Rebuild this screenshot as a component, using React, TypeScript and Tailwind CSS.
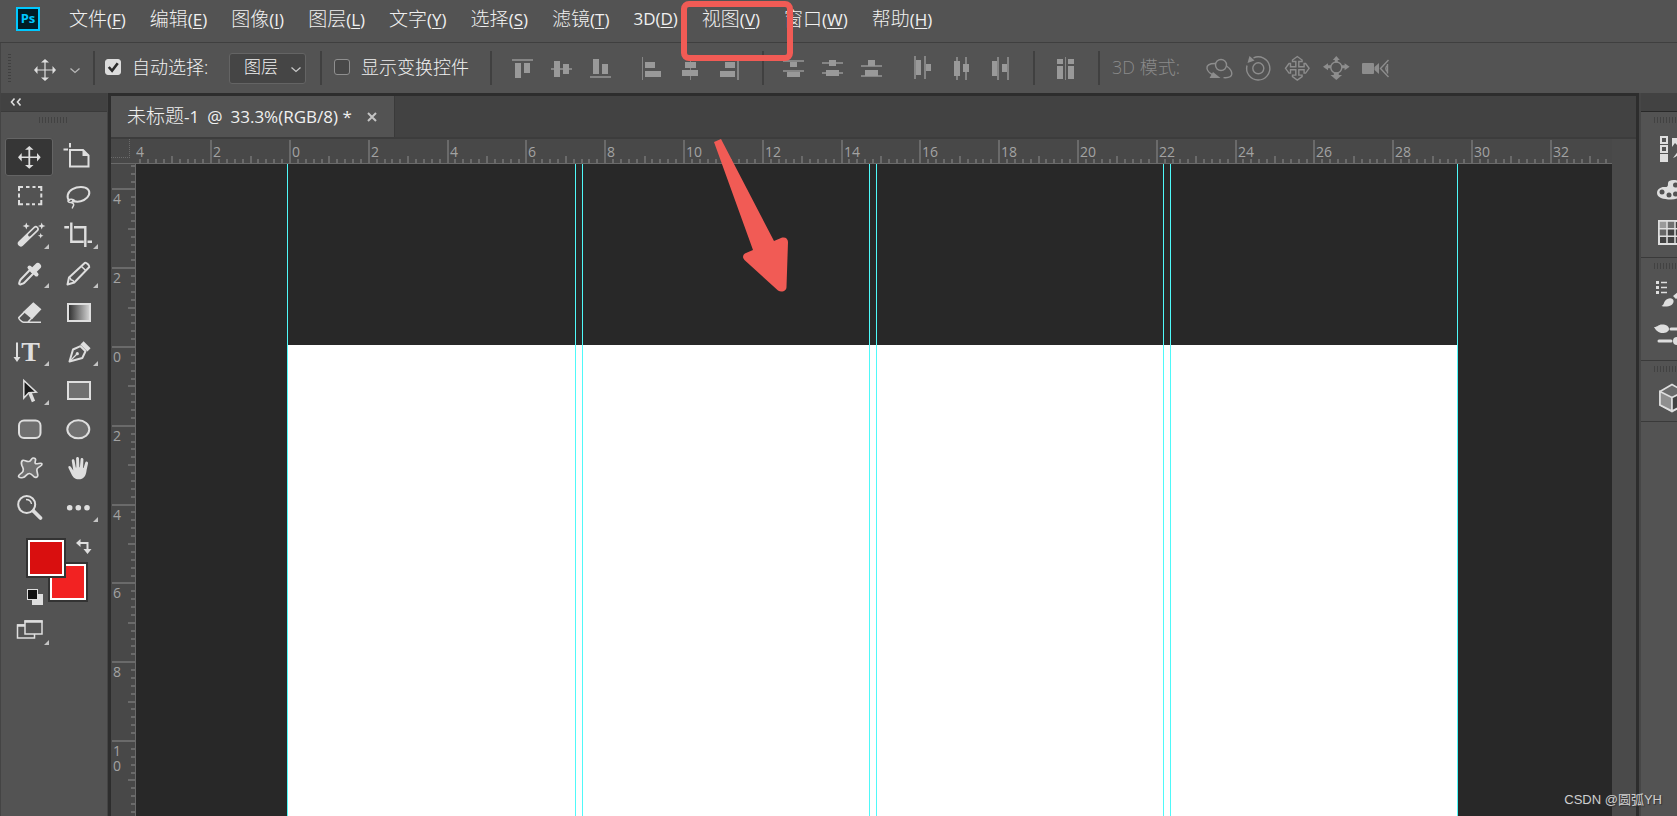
import type { ReactNode } from "react";

const MENUS = [
  { name: "文件", key: "F" },
  { name: "编辑", key: "E" },
  { name: "图像", key: "I" },
  { name: "图层", key: "L" },
  { name: "文字", key: "Y" },
  { name: "选择", key: "S" },
  { name: "滤镜", key: "T" },
  { name: "3D", key: "D" },
  { name: "视图", key: "V" },
  { name: "窗口", key: "W" },
  { name: "帮助", key: "H" },
];

// [x, y, width, height]
type Bar = [number, number, number, number];

interface AlignIcon {
  label: string;
  bars: Bar[];
  lines: Bar[];
}

const ALIGN_VERTICAL: AlignIcon[] = [
  { label: "顶对齐", bars: [[9, 11, 6, 15], [18, 11, 6, 10]], lines: [[6, 7, 21, 2]] },
  { label: "垂直居中对齐", bars: [[9, 9, 6, 16], [18, 12, 6, 10]], lines: [[6, 16, 21, 2]] },
  { label: "底对齐", bars: [[9, 7, 6, 15], [18, 12, 6, 10]], lines: [[6, 24, 21, 2]] },
];

const ALIGN_HORIZONTAL: AlignIcon[] = [
  { label: "左对齐", bars: [[10, 10, 10, 6], [10, 19, 16, 6]], lines: [[7, 5, 1, 23]] },
  { label: "水平居中对齐", bars: [[11, 10, 11, 6], [8, 18, 16, 6]], lines: [[16, 5, 1, 23]] },
  { label: "右对齐", bars: [[12, 10, 10, 6], [7, 19, 15, 6]], lines: [[24, 5, 2, 23]] },
];

const DISTRIBUTE_VERTICAL: AlignIcon[] = [
  { label: "按顶分布", bars: [[13, 10, 7, 5], [10, 20, 13, 5]], lines: [[6, 8, 21, 2], [6, 18, 21, 2]] },
  { label: "垂直居中分布", bars: [[13, 8, 7, 6], [10, 18, 13, 6]], lines: [[6, 10, 21, 2], [6, 20, 21, 2]] },
  { label: "按底分布", bars: [[13, 8, 7, 6], [10, 18, 13, 6]], lines: [[6, 13, 21, 2], [6, 23, 21, 2]] },
];

const DISTRIBUTE_HORIZONTAL: AlignIcon[] = [
  { label: "按左分布", bars: [[10, 8, 5, 15], [20, 12, 5, 7]], lines: [[8, 4, 2, 23], [18, 4, 2, 23]] },
  { label: "水平居中分布", bars: [[9, 9, 6, 15], [18, 12, 6, 8]], lines: [[11, 5, 2, 23], [20, 5, 2, 23]] },
  { label: "按右分布", bars: [[8, 9, 5, 15], [18, 12, 5, 8]], lines: [[13, 5, 2, 23], [23, 5, 2, 23]] },
];

const AUTO_ALIGN: AlignIcon[] = [
  {
    label: "自动对齐图层",
    bars: [[8, 7, 6, 5], [8, 14, 6, 13], [19, 7, 6, 5], [19, 14, 6, 13]],
    lines: [[16, 5, 1, 23]],
  },
];

function AlignGroup({ icons }: { icons: AlignIcon[] }) {
  return (
    <div className="flex gap-[7px]">
      {icons.map((icon) => (
        <button key={icon.label} aria-label={icon.label} className="size-8">
          <svg viewBox="0 0 32 32" className="size-8" shapeRendering="crispEdges">
            {icon.lines.map(([x, y, w, h]) => (
              <rect key={`l${x}-${y}`} x={x} y={y} width={w} height={h} fill="#858585" />
            ))}
            {icon.bars.map(([x, y, w, h]) => (
              <rect key={`b${x}-${y}`} x={x} y={y} width={w} height={h} fill="#999999" />
            ))}
          </svg>
        </button>
      ))}
    </div>
  );
}

const MODES_3D: { label: string; icon: ReactNode }[] = [
  {
    label: "环绕移动 3D 相机",
    icon: (
      <>
        <circle cx="18" cy="13" r="5.500" />
        <path d="M12 11.500C6 11.500 3.500 13.500 4 16.500c.4 2.600 2.500 4.500 5.500 6.200M23.500 14c3.500 2.500 5.500 5 5.300 8-.3 3-3.500 4-8.300 3.600" />
        <path d="M10 20l7.500 6H6.500z" fill="#8d8d8d" stroke="none" />
      </>
    ),
  },
  {
    label: "滚动 3D 相机",
    icon: (
      <>
        <circle cx="16.300" cy="16.300" r="5.500" />
        <path d="M11.500 5.800A11.600 11.600 0 1 1 5 13.500" />
        <path d="M5.500 11l2-7 5 4.500z" fill="#8d8d8d" stroke="none" />
      </>
    ),
  },
  {
    label: "平移 3D 相机",
    icon: (
      <path d="M14.800 14.800V9.500h-3.300v-1.500l4.800-3.500 4.800 3.500v1.500h-3.300v5.300h5.300v-3.300h1.500l3.500 4.800-3.500 4.800h-1.500v-3.300h-5.300v5.300h3.300v1.500l-4.800 3.500-4.800-3.500v-1.500h3.300v-5.300H9.500v3.300H8l-3.500-4.800L8 11.500h1.500v3.300z" />
    ),
  },
  {
    label: "滑动 3D 相机",
    icon: (
      <>
        <circle cx="16.300" cy="15.500" r="5.500" />
        <path
          d="M16.300 4l3.500 4h-2v2.500h-3V8h-2zM3 14.800l5-3.500v2h3v3H8v2zM29.600 14.800l-5-3.500v2h-3v3h3v2zM16.300 28l-5.800-5h3.300v-2.500h5V23h3.300z"
          fill="#8d8d8d"
          stroke="none"
        />
      </>
    ),
  },
  {
    label: "变焦 3D 相机",
    icon: (
      <>
        <rect x="3" y="11" width="12" height="11" rx="1" fill="#8d8d8d" stroke="none" />
        <path d="M20 11v11l-4.500-4v-3z" fill="#8d8d8d" stroke="none" />
        <path d="M29.500 8l-8 8.500 8 8.500M28.500 12v9.500" />
        <path d="M28.500 13.500a3.500 3.500 0 0 0 0 6" />
      </>
    ),
  },
];

interface Tool {
  label: string;
  icon: ReactNode;
  more?: boolean;
  active?: boolean;
}

// every tool icon is drawn in a 48x38 box, light stroke
const TOOLS: Tool[] = [
  {
    label: "移动工具",
    active: true,
    icon: (
      <path
        d="M23.400 11.700h-3.400L24.300 8l4.200 3.700h-3.300v6.700H32v-3.300l3.700 4.200-3.700 4.200v-3.400h-6.800v6.800h3.300l-4.200 3.900-4.300-3.900h3.400v-6.800h-6.700v3.400L13 19.300l3.700-4.200v3.300h6.700z"
        fill="#dedede"
        stroke="none"
      />
    ),
  },
  {
    label: "画板工具",
    icon: (
      <>
        <path d="M9.500 11.500h4.500M16 5v4.500" />
        <path d="M16 12h13l5.500 5.500v11H16z" />
        <path d="M28.500 12v6h6z" fill="#dedede" stroke="none" />
      </>
    ),
  },
  {
    label: "矩形选框工具",
    icon: (
      <path d="M14 14v-4h4M21 10h3.500M27.500 10h3M33 10h3.300v4M36.300 16.500v4M36.300 23v4.300H33M30 27.300h-3M24.500 27.300H21M18 27.300h-4V23M14 20.500v-4" />
    ),
  },
  {
    label: "套索工具",
    icon: (
      <>
        <path d="M15.500 24c-3.500-4-2-9 3-11.800 5-2.900 12.500-3 15.500.2 2.800 3.200 1 8-4 10.600-3.500 1.800-8.500 2-12 .5" />
        <path
          d="M20.500 23.300c-1.500-1.300-4.500-1.500-6-.3-1.300 1.200.2 2.700 2.200 2.500 2-.2 3.500-1 3.800-2.200M17 25.500c2.500.5 3.300 2 2.300 3.500-.8 1-1.300 1.500-.7 2.500"
          strokeWidth="1.500"
        />
      </>
    ),
  },
  {
    label: "魔棒工具",
    more: true,
    icon: (
      <>
        <path d="M15.800 27.500L30.800 13" strokeWidth="6" strokeLinecap="round" />
        <path d="M24.500 19l6.300-6" stroke="#535353" strokeWidth="2.800" strokeLinecap="round" />
        <path
          d="M21.300 6.500l1 2.500 2.700 1-2.700 1-1 2.500-1-2.500-2.700-1 2.700-1zM36.700 6.500l1 2.500 2.700 1-2.700 1-1 2.500-1-2.500-2.700-1 2.700-1zM35.700 17l.8 2 2 .8-2 .8-.8 2-.8-2-2-.8 2-.8z"
          fill="#dedede"
          stroke="none"
        />
      </>
    ),
  },
  {
    label: "裁剪工具",
    more: true,
    icon: <path d="M17.300 6.500v19.200h12.500M10.300 11.300h4.700M20 11.300h11.300V31M33.500 25.700h4.500" strokeWidth="2.400" />,
  },
  {
    label: "吸管工具",
    more: true,
    icon: (
      <>
        <path d="M26 13.800l-10.300 10.700c-1.200 1.300-.8 2-1.500 3.500-.4 1 .7 1.800 1.600 1.300 1.400-.8 2.400-.5 3.500-1.600L29.800 17" />
        <path d="M24.500 12.500l7 7" strokeWidth="4" strokeLinecap="round" />
        <path d="M28.500 15.500l4.300-4.300" strokeWidth="6.500" strokeLinecap="round" />
      </>
    ),
  },
  {
    label: "铅笔工具",
    more: true,
    icon: (
      <>
        <path d="M13.500 29.500l1.500-7L31 7.800c1-.8 4.700 2.700 4.300 4.200L20.300 27.500z" strokeLinejoin="round" />
        <path d="M15 22.500c1.500.2 1.800.7 2 2.300 1.700.2 2.600.6 3.300 2.700M27.500 11.500l4.500 4.300" strokeWidth="1.500" />
      </>
    ),
  },
  {
    label: "橡皮擦工具",
    icon: (
      <>
        <path d="M28.300 9.500l6.700 5.800-8 8.500-7.200-6.200z" fill="#dedede" />
        <path d="M19.800 17.600l-6 6c-.8.800 3.200 4.600 4.700 4.600h4.300l4.200-4.400M18 28.300h18" strokeWidth="1.500" />
      </>
    ),
  },
  {
    label: "渐变工具",
    icon: (
      <>
        <defs>
          <linearGradient id="tool-gradient">
            <stop offset="0" stopColor="#2b2b2b" />
            <stop offset="1" stopColor="#d6d6d6" />
          </linearGradient>
        </defs>
        <rect x="14" y="10" width="22" height="17" fill="url(#tool-gradient)" />
      </>
    ),
  },
  {
    label: "直排文字工具",
    more: true,
    icon: (
      <>
        <path d="M12 9.500V25" />
        <path d="M8.500 24h7L12 29z" fill="#dedede" stroke="none" />
        <text
          x="25.500"
          y="28"
          textAnchor="middle"
          fontFamily="Liberation Serif, serif"
          fontWeight="700"
          fontSize="28"
          fill="#dedede"
          stroke="none"
        >
          T
        </text>
      </>
    ),
  },
  {
    label: "钢笔工具",
    more: true,
    icon: (
      <>
        <path d="M15.500 28.500l3.500-12 7.500-3.300 5 5L28.300 25z" strokeLinejoin="round" />
        <path d="M15.500 28.500l7-7" strokeWidth="1.300" />
        <circle cx="23.300" cy="20.700" r="1.600" fill="#dedede" stroke="none" />
        <path d="M28 9.800l7 7" strokeWidth="4.500" />
      </>
    ),
  },
  {
    label: "路径选择工具",
    more: true,
    icon: (
      <>
        <path d="M25 21l3.500 8.500" strokeWidth="3.500" />
        <path d="M18.800 8.500v17.500l5-5.300 7.500-.5z" fill="#1c1c1c" strokeWidth="1.500" />
      </>
    ),
  },
  { label: "矩形工具", icon: <rect x="14" y="10" width="22" height="17" fill="#707070" /> },
  { label: "圆角矩形工具", icon: <rect x="14" y="9.500" width="21.500" height="17.500" rx="5" fill="#707070" /> },
  { label: "椭圆工具", icon: <ellipse cx="24.300" cy="18.300" rx="11" ry="9" fill="#707070" /> },
  {
    label: "自定形状工具",
    icon: (
      <path
        d="M17.500 10.500c1.500-1.200 3.500 1.300 6.500 1 2-.3 2.500-3.300 4-3.500 2-.2 3 1 2.500 2.500-.4 1.500-1 2.700.3 3.200 1.700.5 5.700-1.500 6.200.3.500 2-4 2.800-5 5-.8 2 1.300 5 .7 7-.5 1.500-2.300 1.700-3.700.7-1.500-1.200-2.500-3-4.500-3.200-3-.2-3.500 3.500-6.500 4-2 .4-4.200.3-4.500-1.200-.3-2 3.500-2.500 4.500-5 1.300-3-.5-4-1.200-6-.5-1.600-.3-4 .7-4.800z"
        fill="#707070"
        strokeWidth="1.700"
      />
    ),
  },
  {
    label: "抓手工具",
    icon: (
      <path
        d="M19.300 20.500L17.800 11c-.3-2 2.300-2.500 2.700-.5l1.300 7h.5l-.2-9c0-2 2.800-2 2.900 0l.4 8.700h.5l.7-7.800c.2-2 2.800-1.800 2.800.2l-.3 8.400h.5l1.600-5.300c.6-2 3.100-1.200 2.800.7-.7 3.500-1.300 5.500-1.600 8-.6 4.300-2.700 7.900-7.700 7.900-4 0-5.300-1.700-6.700-4L14.500 18c-.8-1.700 1.100-2.600 2.300-1.200z"
        fill="#dedede"
        stroke="none"
      />
    ),
  },
  {
    label: "缩放工具",
    icon: (
      <>
        <circle cx="21.700" cy="15.500" r="8.500" />
        <path d="M21 10.500c3 0 5 1.500 5.500 4.500" strokeWidth="1.300" />
        <path d="M28.500 22l7 7" strokeWidth="3.800" strokeLinecap="round" />
      </>
    ),
  },
  {
    label: "编辑工具栏",
    more: true,
    icon: (
      <g fill="#dedede" stroke="none">
        <circle cx="15.700" cy="18.700" r="2.800" />
        <circle cx="24.300" cy="18.700" r="2.800" />
        <circle cx="33" cy="18.700" r="2.800" />
      </g>
    ),
  },
];

function ToolButton({ label, icon, more, active }: Tool) {
  return (
    <button
      aria-label={label}
      className={
        active
          ? "h-[38px] w-12 rounded-[3px] bg-[#363636] shadow-[inset_0_0_0_1px_#646464]"
          : "h-[38px] w-12 rounded-[3px]"
      }
    >
      <svg viewBox="0 0 48 38" className="h-[38px] w-12" fill="none" stroke="#dedede" strokeWidth="2">
        {icon}
        {more && <path d="M44 28v5h-5z" fill="#c4c4c4" stroke="none" />}
      </svg>
    </button>
  );
}

const PIXELS_PER_TICK = 7.88;
const TICK_LENGTH = { major: 23, mid: 7, minor: 4 };

interface Tick {
  pos: number;
  unit: number;
  size: "major" | "mid" | "minor";
}

function buildTicks(zero: number, from: number, to: number): Tick[] {
  const ticks: Tick[] = [];
  for (let i = from; i <= to; i++) {
    ticks.push({
      pos: Math.round(zero + i * PIXELS_PER_TICK),
      unit: Math.abs(i / 5),
      size: i % 10 === 0 ? "major" : i % 5 === 0 ? "mid" : "minor",
    });
  }
  return ticks;
}

const X_TICKS = buildTicks(153, -20, 167);
const Y_TICKS = buildTicks(182, -23, 59);

function HorizontalRuler() {
  return (
    <svg className="box-content h-6 min-w-0 flex-1 border-b border-[#6a6a6a] bg-[#484848]">
      {X_TICKS.map((t) => (
        <rect key={t.pos} x={t.pos} y={24 - TICK_LENGTH[t.size]} width={2} height={TICK_LENGTH[t.size]} fill="#6a6a6a" />
      ))}
      {X_TICKS.filter((t) => t.size === "major").map((t) => (
        <text key={t.pos} x={Math.max(0, t.pos + 3)} y={18} fontSize="14" fill="#a3a3a3">
          {t.unit}
        </text>
      ))}
    </svg>
  );
}

function VerticalRuler() {
  return (
    <svg className="box-content w-6 shrink-0 self-stretch border-r border-[#6a6a6a] bg-[#484848]">
      {Y_TICKS.map((t) => (
        <rect key={t.pos} x={24 - TICK_LENGTH[t.size]} y={t.pos} width={TICK_LENGTH[t.size]} height={2} fill="#6a6a6a" />
      ))}
      {Y_TICKS.filter((t) => t.size === "major").map((t) => (
        <g key={t.pos} fontSize="14" fill="#a3a3a3">
          {/* two-digit labels are stacked, one digit per line */}
          {String(t.unit)
            .split("")
            .map((digit, i) => (
              <text key={i} x={2} y={t.pos + 16 + i * 15}>
                {digit}
              </text>
            ))}
        </g>
      ))}
    </svg>
  );
}

function Grip({ vertical }: { vertical?: boolean }) {
  return (
    <div
      className={
        vertical
          ? "h-7 w-[3px] bg-[repeating-linear-gradient(to_bottom,#404040_0_1px,transparent_1px_3px)]"
          : "h-1.5 w-7 bg-[repeating-linear-gradient(to_right,#424242_0_1px,transparent_1px_3px)]"
      }
    />
  );
}

function Checkbox({ id, label, defaultChecked }: { id: string; label: string; defaultChecked?: boolean }) {
  return (
    <div className="flex items-center gap-[11px] pb-[3px]">
      <span className="relative flex">
        <input
          id={id}
          type="checkbox"
          defaultChecked={defaultChecked}
          className="peer size-4 appearance-none rounded-[3px] border border-[#8f8f8f] bg-[#484848] checked:border-[#dcdcdc] checked:bg-[#dcdcdc]"
        />
        <svg viewBox="0 0 17 17" className="pointer-events-none absolute inset-0 hidden size-4 peer-checked:block">
          <path d="M4 8.500l3.500 4L13.500 4.500" fill="none" stroke="#2b2b2b" strokeWidth="2.800" />
        </svg>
      </span>
      <label htmlFor={id} className="text-lg leading-6 font-light whitespace-nowrap">
        {label}
      </label>
    </div>
  );
}

function MenuBar() {
  return (
    <header className="flex h-[43px] shrink-0 items-center border-b border-[#3f3f3f] bg-[#535353] pb-1 pl-4">
      <svg viewBox="0 0 24 24" className="mr-[29px] size-6 shrink-0" role="img" aria-label="Photoshop">
        <rect x="1" y="1" width="22" height="22" fill="#001d26" stroke="#00c8ff" strokeWidth="2" />
        <text x="12" y="16" textAnchor="middle" fontFamily="Open Sans, sans-serif" fontSize="13" fontWeight="700" fill="#00c8ff">
          Ps
        </text>
      </svg>
      <nav className="flex gap-6">
        {MENUS.map((menu) => (
          <button key={menu.key} className="flex items-baseline text-[17px] leading-7 whitespace-nowrap">
            <span className={menu.name === "3D" ? "" : "text-[19px] font-light"}>{menu.name}</span>
            <span>
              (<span className="underline underline-offset-2">{menu.key}</span>)
            </span>
          </button>
        ))}
      </nav>
    </header>
  );
}

function OptionsBar() {
  return (
    <div className="flex h-[50px] shrink-0 items-center overflow-hidden border-l border-[#444444] bg-[#535353]">
      <div className="flex w-[92px] shrink-0 items-center pl-[7px]">
        <Grip vertical />
        <button aria-label="当前工具：移动" className="flex items-center gap-1.5 pt-1 pl-[18px]">
          <svg viewBox="0 0 32 32" className="size-8">
            <path
              d="M15.400 8.500h-3.400L16 5l4 3.500h-3.400v6.900h6.900V12L27 16l-3.500 4v-3.400h-6.900v6.900H20L16 27l-4-3.500h3.400v-6.900H8.500V20L5 16l3.500-4v3.400h6.900z"
              fill="#dedede"
            />
          </svg>
          <svg viewBox="0 0 16 16" className="size-4">
            <path d="M3.500 6.500L8 10.500l4.500-4" fill="none" stroke="#b8b8b8" strokeWidth="1.300" />
          </svg>
        </button>
      </div>
      <div className="flex h-[34px] w-[227px] shrink-0 items-center justify-between border-l-2 border-[#404040] pr-[14px] pl-[10px]">
        <Checkbox id="auto-select" label="自动选择:" defaultChecked />
        <div className="relative">
          <select
            aria-label="自动选择"
            className="h-[31px] w-[77px] appearance-none rounded-[3px] border border-[#646464] bg-[#454545] pb-0.5 pl-[14px] text-[17px] leading-6 font-light"
          >
            <option>图层</option>
            <option>组</option>
          </select>
          <svg viewBox="0 0 16 16" className="pointer-events-none absolute top-2 right-[2px] size-4">
            <path d="M3.500 6.500L8 10.500l4.500-4" fill="none" stroke="#c8c8c8" strokeWidth="1.300" />
          </svg>
        </div>
      </div>
      <div className="flex h-[34px] w-[170px] shrink-0 items-center border-l-2 border-[#404040] pl-3">
        <Checkbox id="show-controls" label="显示变换控件" />
      </div>
      <div className="flex h-[34px] w-[272px] shrink-0 items-center gap-[19px] border-l-2 border-[#404040] pl-[14px]">
        <AlignGroup icons={ALIGN_VERTICAL} />
        <AlignGroup icons={ALIGN_HORIZONTAL} />
      </div>
      <div className="flex h-[34px] w-[271px] shrink-0 items-center gap-[19px] border-l-2 border-[#404040] pl-[13px]">
        <AlignGroup icons={DISTRIBUTE_VERTICAL} />
        <AlignGroup icons={DISTRIBUTE_HORIZONTAL} />
      </div>
      <div className="flex h-[34px] w-[65px] shrink-0 items-center border-l-2 border-[#404040] pl-[14px]">
        <AlignGroup icons={AUTO_ALIGN} />
      </div>
      <div className="flex h-[34px] items-center border-l-2 border-[#404040] pl-3">
        <span className="w-[91px] pb-[3px] text-lg leading-6 font-light whitespace-nowrap text-[#8a8a8a]">3D 模式:</span>
        <div className="flex gap-[7px]">
          {MODES_3D.map((mode) => (
            <button key={mode.label} aria-label={mode.label} className="size-8">
              <svg viewBox="0 0 32 32" className="size-8" fill="none" stroke="#8d8d8d" strokeWidth="1.400">
                {mode.icon}
              </svg>
            </button>
          ))}
        </div>
      </div>
    </div>
  );
}

function ToolPanel() {
  return (
    <aside className="flex w-[108px] shrink-0 flex-col border-x border-[#444444] bg-[#535353]">
      <div className="flex h-[19px] shrink-0 items-center border-b border-[#3a3a3a] bg-[#424242] pl-2">
        <button aria-label="折叠面板">
          <svg viewBox="0 0 14 10" className="h-2.5 w-3.5">
            <path d="M5.500 1.500L2.500 5l3 3.500M11.500 1.500L8.500 5l3 3.500" fill="none" stroke="#dedede" strokeWidth="1.600" />
          </svg>
        </button>
      </div>
      <div className="flex h-[26px] shrink-0 justify-center pt-[5px] pr-0.5">
        <Grip />
      </div>
      <div className="grid grid-cols-[48px_48px] gap-px pl-1">
        {TOOLS.map((tool) => (
          <ToolButton key={tool.label} {...tool} />
        ))}
      </div>

      {/* foreground / background colors */}
      <div className="relative mt-[11px] h-[70px]">
        <button
          aria-label="背景色"
          className="absolute top-[26px] left-[49px] size-9 border-2 border-white bg-[#f22222] shadow-[0_0_0_2px_#333333]"
        />
        <button
          aria-label="前景色"
          className="absolute top-[2px] left-[27px] size-9 border-2 border-white bg-[#d90f0f] shadow-[0_0_0_2px_#333333]"
        />
        <button aria-label="切换颜色" className="absolute top-0 left-[74px]">
          <svg viewBox="0 0 18 18" className="size-[18px]">
            <path d="M4 5h8.500v6" fill="none" stroke="#dedede" strokeWidth="2" />
            <path d="M5.500 1v8L1 5zM8.500 11h8l-4 5z" fill="#dedede" />
          </svg>
        </button>
        <button aria-label="默认颜色" className="absolute top-[51px] left-[26px]">
          <svg viewBox="0 0 16 16" className="size-4" shapeRendering="crispEdges">
            <rect x="5" y="5" width="11" height="11" fill="#dedede" />
            <rect x="0" y="0" width="11" height="11" fill="#dedede" />
            <rect x="1" y="1" width="9" height="9" fill="#111111" />
          </svg>
        </button>
      </div>
      <button aria-label="更改屏幕模式" className="ml-1 h-[38px] w-12">
        <svg viewBox="0 0 48 38" className="h-[38px] w-12" fill="none" stroke="#dedede" strokeWidth="1.500">
          <rect x="12.500" y="17" width="17" height="13" />
          <path d="M12 17.500h17" strokeWidth="2.500" />
          <rect x="20" y="13" width="17" height="13" fill="#535353" />
          <path d="M19.500 13.500h18" strokeWidth="2.500" />
          <path d="M44 32v5h-5z" fill="#c4c4c4" stroke="none" />
        </svg>
      </button>
    </aside>
  );
}

// distance in pixels from the left edge of the paper
const GUIDES = [0, 288, 295, 582, 589, 876, 883, 1170];

function DocumentWindow() {
  return (
    <main className="flex min-w-0 flex-1 flex-col border-x-3 border-t-3 border-[#2d2d2d] bg-[#484848]">
      <div className="flex h-[43px] shrink-0 border-b-2 border-[#3c3c3c] bg-[#424242]">
        <div className="flex items-center gap-[14px] border-r border-[#3a3a3a] bg-[#535353] px-4 text-[17px]">
          <h1 className="flex items-baseline gap-2 whitespace-nowrap">
            <span>
              <span className="text-[19px] font-light">未标题</span>-1
            </span>
            <span>@</span>
            <span>33.3%(RGB/8) *</span>
          </h1>
          <button aria-label="关闭">
            <svg viewBox="0 0 12 12" className="size-3">
              <path d="M2 2l8 8M10 2l-8 8" stroke="#c4c4c4" strokeWidth="2" />
            </svg>
          </button>
        </div>
      </div>
      <div className="flex min-h-0 flex-1">
        <div className="flex min-w-0 flex-1 flex-col">
          <div className="flex h-[25px] shrink-0">
            <div className="w-[25px] shrink-0 border-b border-[#6a6a6a]">
              <div className="h-[19px] w-[19px] border-r border-b border-dotted border-[#6a6a6a]" />
            </div>
            <HorizontalRuler />
          </div>
          <div className="flex min-h-0 flex-1">
            <VerticalRuler />
            <div className="relative min-w-0 flex-1 overflow-hidden bg-[#282828]">
              <div className="absolute top-[181px] bottom-0 left-[151px] w-[1170px] bg-white" />
              <div className="absolute inset-y-0 left-[151px]">
                {GUIDES.map((x) => (
                  <div key={x} className="absolute inset-y-0 w-px bg-[#4ff9f9]" style={{ left: x }} />
                ))}
              </div>
            </div>
          </div>
        </div>
        <div className="w-6 shrink-0 bg-[#4a4a4a]" />
      </div>
    </main>
  );
}

function PanelIcon({ label, children }: { label: string; children: ReactNode }) {
  return (
    <button aria-label={label} className="block h-[42px] w-12">
      <svg viewBox="1 0 48 42" className="h-[42px] w-12" fill="none" stroke="#dedede" strokeWidth="2">
        {children}
      </svg>
    </button>
  );
}

// collapsed panels, partly out of view at the right edge of the window
function PanelDock() {
  return (
    <aside className="w-[38px] shrink-0 overflow-hidden border-l-2 border-[#464646] bg-[#535353]">
      <div className="h-[19px] border-b border-[#282828] bg-[#424242]" />
      <section className="h-[146px] border-b border-[#3a3a3a]">
        <div className="pt-[5px] pl-[13px]">
          <Grip />
        </div>
        <div className="pt-[5px]">
          <PanelIcon label="历史记录">
            <rect x="21" y="9" width="6" height="6" />
            <rect x="21" y="18" width="6" height="6" />
            <rect x="20" y="26" width="8" height="8" fill="#dedede" stroke="none" />
            <path d="M32 10v9l3-4 3 3h6v-8zM33 30c4-1 6-4 6-8" fill="#dedede" stroke="none" />
          </PanelIcon>
          <PanelIcon label="颜色">
            <path
              d="M17 23c0-4 4-6.500 8-6 3 .4 3-1.500 3-4 .5-3 5-3.500 9-2.500 6 1.500 8 6 7 11-1.500 5-7 8-13 8-8 0-14-2-14-6.500z"
              fill="#dedede"
              stroke="none"
            />
            <g fill="#535353" stroke="none">
              <circle cx="22" cy="22" r="2.500" />
              <circle cx="29" cy="25" r="2.500" />
              <circle cx="35.500" cy="24" r="2.500" />
              <circle cx="35.500" cy="15" r="2.500" />
            </g>
          </PanelIcon>
          <PanelIcon label="色板">
            <rect x="19" y="9" width="24" height="23" fill="#424242" />
            <rect x="19" y="9" width="8" height="8" fill="#9a9a9a" stroke="none" />
            <rect x="27" y="9" width="8" height="8" fill="#707070" stroke="none" />
            <rect x="19" y="17" width="8" height="8" fill="#666666" stroke="none" />
            <path d="M19 16.700h24M19 24.300h24M27 9v23M35 9v23M19 9h24v23H19z" strokeWidth="1.500" />
          </PanelIcon>
        </div>
      </section>
      <section className="h-[103px] border-b border-[#3a3a3a]">
        <div className="pt-[5px] pl-[13px]">
          <Grip />
        </div>
        <div className="pt-[5px]">
          <PanelIcon label="画笔设置">
            <path d="M16 8.500h3M16 13.500h3M16 18.500h3" strokeWidth="3" />
            <path d="M21 8.500h6M21 13.500h6M21 18.500h6" strokeWidth="1.300" />
            <path
              d="M21.500 32c2.500-1 2-3 3.500-5 2-2.500 5.500-3.500 7.500-2 2 1.700 1 4.700-1 6-3 1.700-7 2-10 1zM33 22l10-8v5l-7 6z"
              fill="#dedede"
              stroke="none"
            />
          </PanelIcon>
          <PanelIcon label="画笔">
            <path
              d="M14 11c4 0 4-2.500 8-2.500 4.500 0 7 2 7 4.500s-3 4-6.500 4c-4 0-6.500-2.500-8.500-6z"
              fill="#dedede"
              stroke="none"
            />
            <path d="M31 13h12M19 25h12" strokeWidth="3" strokeLinecap="round" />
            <circle cx="37" cy="25" r="4" fill="#dedede" stroke="none" />
          </PanelIcon>
        </div>
      </section>
      <section className="h-[61px] border-b border-[#3a3a3a]">
        <div className="pt-[5px] pl-[13px]">
          <Grip />
        </div>
        <div className="pt-1">
          <PanelIcon label="3D">
            <path d="M20 15.500l12-7 12 7V29l-12 6.500L20 29z" fill="#6b6b6b" strokeWidth="1.600" />
            <path d="M20 15.500l12 6V35l-12-6z" fill="#8f8f8f" strokeWidth="1.600" />
            <path d="M32 21.500l12-6V29l-12 6z" fill="#424242" strokeWidth="1.600" />
          </PanelIcon>
        </div>
      </section>
    </aside>
  );
}

export default function App() {
  return (
    <div className="relative flex h-screen flex-col overflow-hidden bg-[#535353] font-['Open_Sans','Noto_Sans_CJK_SC',sans-serif] text-[#f0f0f0]">
      <MenuBar />
      <OptionsBar />
      <div className="flex min-h-0 flex-1">
        <ToolPanel />
        <DocumentWindow />
        <PanelDock />
      </div>

      {/* annotation: highlighted menu and arrow */}
      <div className="pointer-events-none absolute top-px left-[681px] h-[60px] w-28 rounded-[8px] border-6 border-[#f15b55]" />
      <svg viewBox="0 0 76 154" className="pointer-events-none absolute top-[138px] left-[713px] h-[154px] w-[76px]">
        <path
          d="M1 4L8 1l53 102 7-3c4-1.500 7 .5 7 4l-1.500 45c0 4-5 6-8.500 3.500L32 122.500c-3-2.500-2.500-6 1-7.500l7-3z"
          fill="#f15b55"
        />
      </svg>
      <p className="pointer-events-none absolute right-[15px] bottom-2 font-['Liberation_Sans','Noto_Sans_CJK_SC',sans-serif] text-[13px] leading-4 text-[#cfcfcf] [text-shadow:1px_1px_1px_#333333]">
        CSDN @圆弧YH
      </p>
    </div>
  );
}
